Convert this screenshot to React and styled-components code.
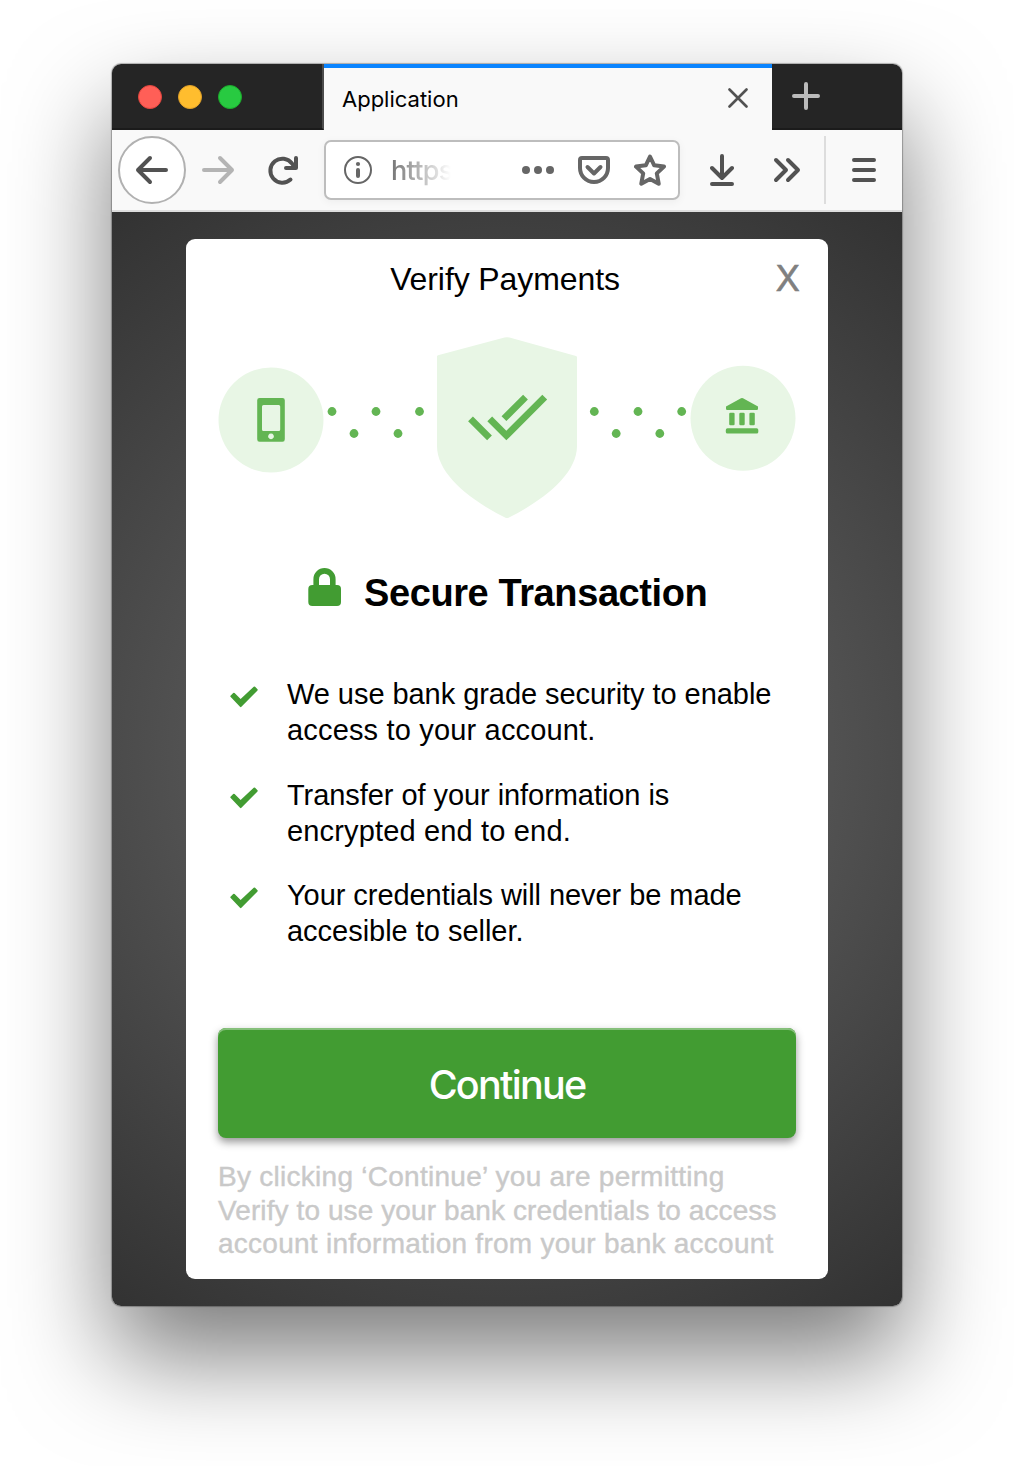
import React from 'react';
import styled, { createGlobalStyle } from 'styled-components';

const Global = createGlobalStyle`
  *, *::before, *::after { box-sizing: border-box; }
  body { margin: 0; background: #fff; font-family: "Liberation Sans", Arial, sans-serif; color: #000; overflow: hidden; }
  svg { display: block; flex: none; }
  button { border: 0; padding: 0; background: none; font: inherit; color: inherit; }
`;

const Desktop = styled.main`
  width: 1014px;
  height: 1466px;
  padding: 64px 112px 160px;
  overflow: hidden;
`;

const BrowserWindow = styled.section`
  height: 1242px;
  border-radius: 9px;
  box-shadow: 0 0 1px 1px rgba(0, 0, 0, 0.28), 0 50px 100px rgba(0, 0, 0, 0.52);
  display: flex;
  flex-direction: column;
  overflow: hidden;
`;

const TitleBar = styled.header`
  height: 66px;
  display: flex;
  background: #252525;
`;

const TrafficLights = styled.div`
  width: 212px;
  display: flex;
  align-items: center;
  gap: 16px;
  padding-left: 26px;
  border-right: 2px solid #4c4c4c;
  border-bottom: 2px solid #1b1b1b;
`;

const Light = styled.span`
  width: 24px;
  height: 24px;
  margin-top: 2px;
  border-radius: 50%;
  background: ${(p) => p.$fill};
  border: 1px solid ${(p) => p.$edge};
`;

const Tab = styled.div`
  width: 448px;
  display: flex;
  align-items: center;
  justify-content: space-between;
  padding: 0 24px 0 18px;
  border-top: 4px solid #0a84ff;
  background: #f9f9f9;
  font: 22px/28px Inter, sans-serif;

  svg { margin-top: -2px; }
`;

const TabTitle = styled.span`
  white-space: nowrap;
`;

const NewTab = styled.div`
  flex: 1;
  padding: 17px 0 0 19px;
  border-bottom: 2px solid #1b1b1b;
`;

const Toolbar = styled.nav`
  height: 82px;
  display: flex;
  align-items: center;
  padding-left: 6px;
  background: #f9f9f9;
  border-bottom: 2px solid #ddd;
`;

const BackButton = styled.button`
  width: 68px;
  height: 68px;
  display: grid;
  place-items: center;
  border: 2px solid #b1b1b1;
  border-radius: 50%;
  background: #fff;
`;

const ToolSlot = styled.button`
  width: ${(p) => p.$w}px;
  height: 68px;
  display: grid;
  place-items: center;
`;

const ToolGap = styled.span`
  width: 14px;
`;

const AddressBar = styled.div`
  width: 356px;
  height: 60px;
  margin-left: 7px;
  padding: 0 12px 0 18px;
  display: flex;
  align-items: center;
  border: 2px solid #bdbdbd;
  border-radius: 7px;
  background: #fff;
  box-shadow: 0 2px 8px rgba(0, 0, 0, 0.05);
`;

const Url = styled.span`
  width: 62px;
  margin: 2px 0 0 19px;
  overflow: hidden;
  font: 500 27px/40px Inter, sans-serif;
  letter-spacing: -0.7px;
  color: #757575;
  mask-image: linear-gradient(90deg, #000 0, transparent 60px);
`;

const AddressActions = styled.div`
  display: flex;
  align-items: center;
  gap: 24px;
  margin-left: auto;
`;

const Divider = styled.span`
  width: 2px;
  height: 68px;
  background: #ddd;
`;

const Page = styled.div`
  flex: 1;
  padding: 27px 74px;
  background: radial-gradient(circle farthest-corner at 50% 50%, #6e6e6e 0%, #323232 100%);
`;

const Dialog = styled.article`
  width: 642px;
  height: 1040px;
  padding: 0 32px;
  display: flex;
  flex-direction: column;
  border-radius: 9px;
  background: #fff;
`;

const DialogHeader = styled.header`
  height: 97px;
  display: grid;
  grid-template-columns: 40px 1fr 40px;
  align-items: start;
  padding-top: 20px;
`;

const DialogTitle = styled.h1`
  grid-column: 2;
  margin: 0 0 0 -4px;
  text-align: center;
  font-size: 32px;
  line-height: 40px;
  font-weight: 400;
  letter-spacing: -0.1px;
`;

const CloseButton = styled.button`
  && {
    margin-right: -4px;
    justify-self: end;
    font: 36px/38px Inter, sans-serif;
    color: #808080;
    -webkit-text-stroke: 0.5px #808080;
  }
`;

const SecureHeading = styled.div`
  display: flex;
  align-items: flex-start;
  gap: 23px;
  margin-top: 48px;
  padding-left: 90px;
`;

const HeadingText = styled.h2`
  margin: 3px 0 0;
  font-size: 38px;
  line-height: 44px;
  font-weight: 700;
  letter-spacing: -0.4px;
  white-space: nowrap;
`;

const Assurances = styled.ul`
  margin: 61px 0 0;
  padding: 0 0 0 12px;
  list-style: none;
  display: flex;
  flex-direction: column;
  gap: 28.5px;
`;

const Assurance = styled.li`
  display: flex;
  gap: 29px;
  font-size: 29px;
  line-height: 36px;
  white-space: nowrap;

  svg { margin-top: 9px; }
`;

const Line = styled.span`
  display: block;
  letter-spacing: ${(p) => p.$tracking}px;
`;

const ContinueButton = styled.button`
  && {
    flex: none;
    height: 110px;
    margin-top: 79px;
    padding-top: 3px;
    border-radius: 8px;
    background: #429c32;
    box-shadow: inset 0 2px 0 #86c07b, 0 4px 8px rgba(0, 0, 0, 0.42);
    color: #fff;
    font: 500 39.5px/48px Inter, sans-serif;
    letter-spacing: -1.75px;
  }
`;

const Terms = styled.p`
  margin: 22px 0 0;
  font-size: 28px;
  line-height: 33.5px;
  color: #c9c9c9;
  -webkit-text-stroke: 0.4px #c9c9c9;
  white-space: nowrap;
`;

const Stroke = ({ w, h, d, color = '#525252', width = 4 }) => (
  <svg width={w} height={h} viewBox={`0 0 ${w} ${h}`} fill="none" stroke={color} strokeWidth={width} strokeLinecap="round" strokeLinejoin="round">
    <path d={d} />
  </svg>
);

const InfoIcon = () => (
  <svg width="28" height="28" viewBox="0 0 28 28">
    <circle cx="14" cy="14" r="13" fill="none" stroke="#666" strokeWidth="2" />
    <circle cx="14" cy="8" r="2.1" fill="#666" />
    <rect x="12" y="12" width="4" height="10" rx="2" fill="#666" />
  </svg>
);

const DotsIcon = () => (
  <svg width="32" height="8" viewBox="0 0 32 8" fill="#666">
    <circle cx="4" cy="4" r="4" />
    <circle cx="16" cy="4" r="4" />
    <circle cx="28" cy="4" r="4" />
  </svg>
);

const LockIcon = () => (
  <svg width="33" height="38" viewBox="0 0 33 38">
    <path d="M8.2 20V11.2a8.300 8.300 0 0 1 16.600 0V20" fill="none" stroke="#429c32" strokeWidth="5.600" />
    <rect x="0.300" y="17" width="32.700" height="21" rx="4" fill="#429c32" />
  </svg>
);

const CheckIcon = () => (
  <svg width="28" height="24" viewBox="0 0 28 24">
    <path d="M0.500 11.800Q0 11.200 0.500 10.700L3.200 8Q3.900 7.500 4.600 8L10.600 13.900L23.700 1.700Q24.400 1.100 25.100 1.700L27.500 4.200Q28 4.800 27.500 5.400L11.400 21.800Q10.700 22.500 10 21.800Z" fill="#429c32" />
  </svg>
);

const dots = [[332, 411.5], [354, 433.5], [376, 411.5], [398, 433.5], [419.5, 411.5], [594.3, 411.5], [616.2, 433.5], [638, 411.5], [659.8, 433.5], [681.7, 411.5]];

const SecurityIllustration = () => (
  <svg width="578" height="184" viewBox="218 336 578 184">
    <g fill="#e8f6e5">
      <circle cx="271" cy="420" r="52.5" />
      <circle cx="743" cy="418.3" r="52.5" />
      <path d="M437 356.500Q437 355.500 438 355.200L504.500 337.500Q507 336.800 509.500 337.500L576 356Q577 356.300 577 357.500V446C577 474 544 500 509 517.500Q507 518.500 505 517.500C470 500 437 474 437 446Z" />
    </g>
    <g fill="#63b553">
      {dots.map(([x, y]) => <circle key={x} cx={x} cy={y} r="4.4" />)}
      <path fillRule="evenodd" d="M259.500 398h23q2.300 0 2.300 2.300v39q0 2.500-2.300 2.500h-23q-2.300 0-2.300-2.500v-39q0-2.300 2.300-2.300zM263.500 405q-1.500 0-1.500 1.500v23q0 1.500 1.500 1.500h15.200q1.500 0 1.500-1.500v-23q0-1.500-1.500-1.500zM271 433.500a2.900 2.900 0 1 0 .01 0z" />
      <path transform="translate(466.700 375.700) scale(3.400)" d="M18 7l-1.410-1.410-6.340 6.340 1.410 1.410L18 7zm4.240-1.410L11.660 16.170 7.480 12l-1.410 1.410L11.660 19l12-12-1.420-1.410zM.41 13.410L6 19l1.410-1.410L1.830 12 .41 13.410z" />
      <path d="M726 406.500L741 398.300q1-.6 2 0L758 406.500V408.800Q758 410 756.800 410H727.200Q726 410 726 408.800z" />
      <rect x="729.2" y="412.7" width="5.4" height="12.6" rx="1.2" />
      <rect x="739.3" y="412.7" width="5.4" height="12.6" rx="1.2" />
      <rect x="749.4" y="412.7" width="5.4" height="12.6" rx="1.2" />
      <rect x="725.8" y="428.3" width="32.5" height="5.3" rx="1.7" />
    </g>
  </svg>
);

const assurances = [
  [['We use bank grade security to enable', -0.055], ['access to your account.', 0.17]],
  [['Transfer of your information is', -0.06], ['encrypted end to end.', 0.16]],
  [['Your credentials will never be made', -0.06], ['accesible to seller.', -0.02]],
];

const terms = [
  ['By clicking ‘Continue’ you are permitting', 0.27],
  ['Verify to use your bank credentials to access', 0.1],
  ['account information from your bank account', 0.26],
];

export default function App() {
  return (
    <Desktop>
      <Global />
      <BrowserWindow>
        <TitleBar>
          <TrafficLights>
            <Light $fill="#ff5f57" $edge="#e2453e" />
            <Light $fill="#ffbd2e" $edge="#e0a028" />
            <Light $fill="#28ca41" $edge="#1cab2c" />
          </TrafficLights>
          <Tab>
            <TabTitle>Application</TabTitle>
            <Stroke w={20} h={20} width={2.6} d="M1.500 1.500L18.500 18.500M18.500 1.500L1.500 18.500" />
          </Tab>
          <NewTab>
            <Stroke w={30} h={30} color="#bbb" d="M15 3V27M3 15H27" />
          </NewTab>
        </TitleBar>
        <Toolbar>
          <BackButton aria-label="Back">
            <Stroke w={34} h={32} d="M31 16H3M15 4L3 16L15 28" />
          </BackButton>
          <ToolSlot $w={64} aria-label="Forward">
            <Stroke w={34} h={32} color="#b4b4b4" d="M3 16H31M19 4L31 16L19 28" />
          </ToolSlot>
          <ToolSlot $w={67} aria-label="Reload">
            <Stroke w={34} h={30} d="M23.500 24.500A12 12 0 1 1 25 8.500L28 13M29 3V13H19" />
          </ToolSlot>
          <AddressBar>
            <InfoIcon />
            <Url>https</Url>
            <AddressActions>
              <DotsIcon />
              <Stroke w={32} h={30} color="#666" d="M4 3H28Q30 3 30 5V13A14 14 0 0 1 2 13V5Q2 3 4 3ZM9.500 12L16 18.500L22.500 12" />
              <Stroke w={32} h={32} color="#666" d="M16 2.500L20.200 11.300L30 12.600L22.800 19.400L24.700 29.700L16 25L7.300 29.700L9.200 19.400L2 12.600L11.800 11.300Z" />
            </AddressActions>
          </AddressBar>
          <ToolSlot $w={84} aria-label="Downloads">
            <Stroke w={24} h={32} d="M12 2V24M2 14L12 24L22 14M2 30H22" />
          </ToolSlot>
          <ToolSlot $w={46} aria-label="More tools">
            <Stroke w={28} h={26} d="M3 3L13 13L3 23M15 3L25 13L15 23" />
          </ToolSlot>
          <ToolGap />
          <Divider />
          <ToolSlot $w={76} aria-label="Menu">
            <Stroke w={24} h={26} d="M2 3H22M2 13H22M2 23H22" />
          </ToolSlot>
        </Toolbar>
        <Page>
          <Dialog>
            <DialogHeader>
              <DialogTitle>Verify Payments</DialogTitle>
              <CloseButton>X</CloseButton>
            </DialogHeader>
            <SecurityIllustration />
            <SecureHeading>
              <LockIcon />
              <HeadingText>Secure Transaction</HeadingText>
            </SecureHeading>
            <Assurances>
              {assurances.map((lines) => (
                <Assurance key={lines[0][0]}>
                  <CheckIcon />
                  <div>
                    {lines.map(([text, tracking]) => <Line key={text} $tracking={tracking}>{text}</Line>)}
                  </div>
                </Assurance>
              ))}
            </Assurances>
            <ContinueButton>Continue</ContinueButton>
            <Terms>
              {terms.map(([text, tracking]) => <Line key={text} $tracking={tracking}>{text}</Line>)}
            </Terms>
          </Dialog>
        </Page>
      </BrowserWindow>
    </Desktop>
  );
}
